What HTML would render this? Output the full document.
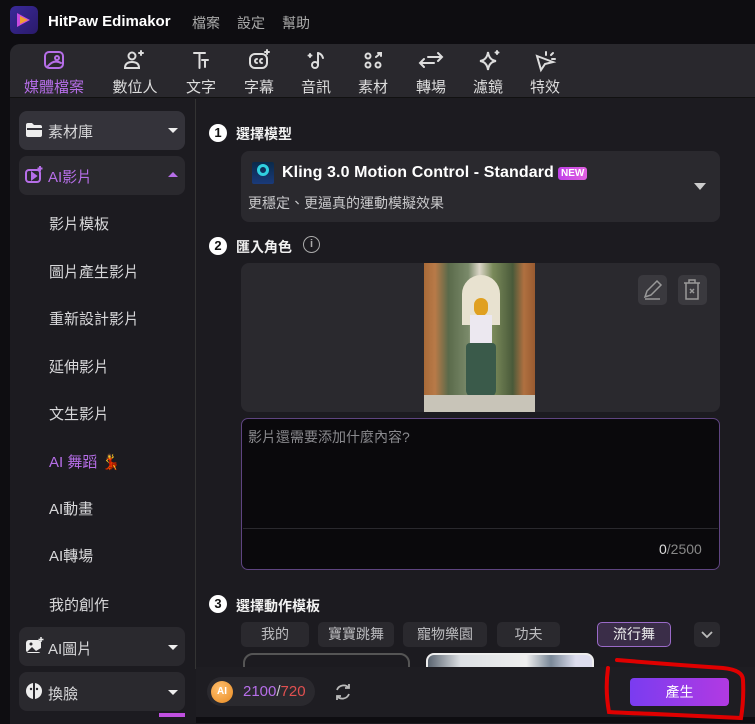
<!DOCTYPE html>
<html><head><meta charset="utf-8"><style>
*{box-sizing:border-box;margin:0;padding:0}
body{width:755px;height:723px;background:#0e0d11;font-family:"Liberation Sans","Noto Sans CJK TC",sans-serif;color:#e6e6e8;position:relative;overflow:hidden}
.a{position:absolute}
.t{white-space:nowrap}
.tb{font-size:15px;color:#ddd;text-align:center;width:60px}
.side{font-size:15px;color:#d8d8da}
.box{background:#2a292e;border-radius:8px}
.sbox{background:#2a292e;border-radius:8px;left:19px;width:166px;height:39px}
.chip{background:#2a292e;border-radius:5px;height:25px;top:622px;font-size:14px;color:#bdbdc0;text-align:center;line-height:25px}
.step{font-size:14px;font-weight:bold;color:#f2f2f2}
.num{width:18px;height:18px;border-radius:50%;background:#fff;color:#111;font-size:13px;font-weight:bold;text-align:center;line-height:18px}
</style></head><body>
<!-- title bar -->
<div class="a" style="left:10px;top:6px;width:28px;height:28px;border-radius:6px;background:linear-gradient(135deg,#3a2a9a,#2a1a6a)"></div>
<svg class="a" style="left:14px;top:11px" width="20" height="18" viewBox="0 0 20 18"><path d="M3 2 L16 9 L3 16Z" fill="#c84ae0"/><path d="M6 5 L14 9 L6 13Z" fill="#f0a030"/></svg>
<div class="a t" style="left:48px;top:13px;font-size:15px;font-weight:bold;color:#fff">HitPaw Edimakor</div>
<div class="a t" style="left:192px;top:13px;font-size:14px;color:#aaa">檔案</div>
<div class="a t" style="left:237px;top:13px;font-size:14px;color:#aaa">設定</div>
<div class="a t" style="left:282px;top:13px;font-size:14px;color:#aaa">幫助</div>
<!-- panel -->
<div class="a" style="left:10px;top:44px;width:745px;height:680px;background:#1c1b20;border-radius:10px 0 0 0"></div>
<div class="a" style="left:10px;top:44px;width:745px;height:54px;background:#29282d;border-radius:10px 0 0 0;border-bottom:1px solid #111"></div>
<!-- toolbar icons -->
<svg class="a" style="left:0;top:48px" width="580" height="26" viewBox="0 0 580 26" fill="none" stroke-width="2" stroke-linecap="round">
<g stroke="#b66ee8"><rect x="45" y="4" width="18" height="16" rx="4"/><circle cx="57" cy="10" r="2"/><path d="M48 18 Q54 11 61 15"/></g>
<g stroke="#ddd"><circle cx="132" cy="8" r="3.5"/><path d="M125 20 Q125 14 132 14 Q139 14 139 20Z"/><path d="M141 3v4M139 5h4"/>
<path d="M194 5h11M199.5 5v15M202 12h6M205 12v7"/>
<rect x="250" y="6" width="17" height="14" rx="5"/><path d="M257 11a2 2 0 1 0 0 4M262 11a2 2 0 1 0 0 4M267 2v4M265 4h4"/>
<path d="M318 5v12"/><circle cx="315" cy="17" r="3"/><path d="M318 5q4 1 5 5M310 6v3M308.5 7.5h3"/>
<circle cx="368" cy="8" r="2.5"/><circle cx="368" cy="17" r="2.5"/><circle cx="378" cy="17" r="2.5"/><path d="M376 9l5-4M378 5h3v3"/>
<path d="M420 15h14M424 11l-4 4 4 4M428 9h14M438 5l4 4-4 4"/>
<path d="M488 4 Q489 12 496 13 Q489 14 488 22 Q487 14 480 13 Q487 12 488 4Z"/><path d="M497 3v3M495.5 4.5h3"/>
<path d="M537 8 L553 14 L545 16 L541 22Z"/><path d="M546 4v3M553 5l-2 2M555 11h-3"/></g>
</svg>
<div class="a t tb" style="left:24px;top:76px;width:60px;color:#b66ee8">媒體檔案</div>
<div class="a t tb" style="left:105px;top:76px">數位人</div>
<div class="a t tb" style="left:171px;top:76px">文字</div>
<div class="a t tb" style="left:229px;top:76px">字幕</div>
<div class="a t tb" style="left:286px;top:76px">音訊</div>
<div class="a t tb" style="left:343px;top:76px">素材</div>
<div class="a t tb" style="left:401px;top:76px">轉場</div>
<div class="a t tb" style="left:458px;top:76px">濾鏡</div>
<div class="a t tb" style="left:515px;top:76px">特效</div>
<!-- sidebar divider -->
<div class="a" style="left:195px;top:99px;width:1px;height:570px;background:#333"></div>
<div class="a sbox" style="top:111px;background:#34333a"></div>
<svg class="a" style="left:25px;top:122px" width="18" height="16"><path d="M1 3a2 2 0 0 1 2-2h4l2 2h6a2 2 0 0 1 2 2v8a2 2 0 0 1-2 2H3a2 2 0 0 1-2-2Z" fill="#eee"/><path d="M2 7h15" stroke="#34333a" stroke-width="2"/></svg>
<div class="a t side" style="left:48px;top:121px">素材庫</div>
<div class="a" style="left:168px;top:128px;border:5px solid transparent;border-top:5px solid #eee;border-bottom:0"></div>
<div class="a sbox" style="top:156px"></div>
<svg class="a" style="left:24px;top:165px" width="20" height="20" fill="none" stroke="#b66ee8" stroke-width="2"><rect x="2" y="5" width="14" height="12" rx="3"/><path d="M8 8l4 3-4 3Z" fill="#b66ee8"/><path d="M16 1v5M13.5 3.5h5"/></svg>
<div class="a t side" style="left:48px;top:166px;color:#b66ee8">AI影片</div>
<div class="a" style="left:168px;top:172px;border:5px solid transparent;border-bottom:5px solid #b66ee8;border-top:0"></div>
<div class="a t side" style="left:49px;top:213px">影片模板</div>
<div class="a t side" style="left:49px;top:261px">圖片產生影片</div>
<div class="a t side" style="left:49px;top:308px">重新設計影片</div>
<div class="a t side" style="left:49px;top:356px">延伸影片</div>
<div class="a t side" style="left:49px;top:403px">文生影片</div>
<div class="a t side" style="left:49px;top:451px;color:#b66ee8">AI 舞蹈 <span style="color:#c02030">💃</span></div>
<div class="a t side" style="left:49px;top:498px">AI動畫</div>
<div class="a t side" style="left:49px;top:545px">AI轉場</div>
<div class="a t side" style="left:49px;top:594px">我的創作</div>
<div class="a sbox" style="top:627px"></div>
<svg class="a" style="left:25px;top:637px" width="19" height="18"><rect x="1" y="3" width="15" height="13" rx="3" fill="#eee"/><path d="M2 15l5-5 4 4 5-3v4H2Z" fill="#2a292e"/><circle cx="6" cy="7" r="1.5" fill="#2a292e"/><path d="M16 0v5M13.5 2.5h5" stroke="#eee" stroke-width="1.5"/></svg>
<div class="a t side" style="left:48px;top:638px">AI圖片</div>
<div class="a" style="left:168px;top:645px;border:5px solid transparent;border-top:5px solid #eee;border-bottom:0"></div>
<div class="a sbox" style="top:672px"></div>
<svg class="a" style="left:25px;top:682px" width="18" height="18"><circle cx="9" cy="9" r="8" fill="#eee"/><path d="M9 1v16" stroke="#2a292e" stroke-width="2"/><circle cx="6" cy="7" r="1.2" fill="#2a292e"/><circle cx="12" cy="7" r="1.2" fill="#2a292e"/></svg>
<div class="a t side" style="left:48px;top:683px">換臉</div>
<div class="a" style="left:168px;top:690px;border:5px solid transparent;border-top:5px solid #eee;border-bottom:0"></div>
<div class="a" style="left:159px;top:713px;width:26px;height:4px;background:#c050e0"></div>
<!-- step 1 -->
<div class="a num" style="left:209px;top:124px">1</div>
<div class="a t step" style="left:236px;top:124px">選擇模型</div>
<div class="a box" style="left:241px;top:151px;width:479px;height:71px"></div>
<div class="a" style="left:252px;top:162px;width:22px;height:22px;background:linear-gradient(#0a2a4a,#1a3a7a);border-radius:2px"></div>
<div class="a" style="left:257px;top:164px;width:12px;height:12px;border:3px solid #30d0e0;border-radius:50%"></div>
<div class="a t" style="left:282px;top:164px;font-size:16px;font-weight:bold;color:#fff;letter-spacing:0.1px">Kling 3.0 Motion Control - Standard</div>
<div class="a t" style="left:558px;top:167px;font-size:10px;font-weight:bold;color:#fff;background:linear-gradient(90deg,#c040e8,#e060e0);border-radius:3px;padding:1px 3px">NEW</div>
<div class="a t" style="left:248px;top:193px;font-size:14px;color:#c8c8ca">更穩定、更逼真的運動模擬效果</div>
<div class="a" style="left:694px;top:183px;border:6px solid transparent;border-top:7px solid #ccc;border-bottom:0"></div>
<!-- step 2 -->
<div class="a num" style="left:209px;top:237px">2</div>
<div class="a t step" style="left:236px;top:237px">匯入角色</div>
<div class="a" style="left:303px;top:236px;width:17px;height:17px;border:1.5px solid #aaa;border-radius:50%;font-size:11px;color:#aaa;text-align:center;line-height:14px;font-weight:bold">i</div>
<div class="a box" style="left:241px;top:263px;width:479px;height:149px"></div>
<div class="a" style="left:424px;top:263px;width:111px;height:149px;background:linear-gradient(90deg,#a86a38 0,#b87a48 10%,#5a6a4a 22%,#7a8a6a 40%,#dcd6c8 50%,#7a8a5a 62%,#4a5a3a 80%,#b07040 90%,#985a30 100%)"></div>
<div class="a" style="left:462px;top:275px;width:38px;height:50px;border-radius:19px 19px 0 0;background:#e8e2d0"></div>
<div class="a" style="left:474px;top:298px;width:14px;height:18px;border-radius:7px;background:#e0a020"></div>
<div class="a" style="left:470px;top:315px;width:22px;height:28px;background:#ece8f0"></div>
<div class="a" style="left:466px;top:343px;width:30px;height:55px;background:#3a5a4a;border-radius:4px 4px 8px 8px"></div>
<div class="a" style="left:424px;top:395px;width:111px;height:17px;background:#c8c4b8"></div>
<div class="a" style="left:638px;top:275px;width:29px;height:30px;background:#3a393e;border-radius:5px"></div>
<svg class="a" style="left:641px;top:279px" width="22" height="22" fill="none" stroke="#999" stroke-width="1.5"><path d="M4 18l2-6 10-10 4 4-10 10Z"/><path d="M4 20h15"/></svg>
<div class="a" style="left:678px;top:275px;width:29px;height:30px;background:#3a393e;border-radius:5px"></div>
<svg class="a" style="left:681px;top:278px" width="22" height="24" fill="none" stroke="#999" stroke-width="1.5"><path d="M3 5h16M8 5V2h6v3M5 5v16h12V5M9 11l4 4M13 11l-4 4"/></svg>
<!-- textarea -->
<div class="a" style="left:241px;top:418px;width:479px;height:152px;background:#0a090c;border:1.5px solid #5e4480;border-radius:7px"></div>
<div class="a" style="left:243px;top:528px;width:475px;height:1px;background:#2a292e"></div>
<div class="a t" style="left:248px;top:427px;font-size:14px;color:#8a8a8e">影片還需要添加什麼內容?</div>
<div class="a t" style="left:659px;top:541px;font-size:14px;color:#888"><span style="color:#ddd">0</span>/2500</div>
<!-- step 3 -->
<div class="a num" style="left:209px;top:595px">3</div>
<div class="a t step" style="left:236px;top:596px">選擇動作模板</div>
<div class="a chip" style="left:241px;width:68px">我的</div>
<div class="a chip" style="left:318px;width:76px">寶寶跳舞</div>
<div class="a chip" style="left:403px;width:84px">寵物樂園</div>
<div class="a chip" style="left:497px;width:63px">功夫</div>
<div class="a chip" style="left:597px;width:74px;background:#3a2d48;border:1.5px solid #9a6ac8;color:#eee;line-height:22px">流行舞</div>
<div class="a chip" style="left:694px;width:26px"></div>
<svg class="a" style="left:701px;top:630px" width="12" height="9"><path d="M1 2l5 5 5-5" stroke="#bbb" stroke-width="1.8" fill="none"/></svg>
<div class="a" style="left:243px;top:653px;width:167px;height:20px;border:2px solid #555;border-radius:10px 10px 0 0;background:#1c1b20"></div>
<div class="a" style="left:426px;top:653px;width:168px;height:20px;border:2px solid #eee;border-radius:8px 8px 0 0;background:linear-gradient(90deg,#5a6470,#dde0e4 20%,#eee 60%,#7a8898 75%,#dde 90%)"></div>
<!-- bottom bar -->
<div class="a" style="left:196px;top:667px;width:559px;height:50px;background:#1e1d22"></div>
<div class="a" style="left:196px;top:717px;width:559px;height:6px;background:#0e0d11"></div>
<div class="a" style="left:207px;top:677px;width:108px;height:29px;background:#2a292e;border-radius:15px"></div>
<div class="a" style="left:211px;top:681px;width:22px;height:22px;border-radius:50%;background:radial-gradient(circle at 40% 35%,#ffc070,#e88a20);font-size:10px;color:#fff;font-weight:bold;text-align:center;line-height:22px">AI</div>
<div class="a t" style="left:243px;top:683px;font-size:15px;color:#b66ee8">2100<span style="color:#ccc">/</span><span style="color:#e05050">720</span></div>
<svg class="a" style="left:333px;top:682px" width="20" height="20" fill="none" stroke="#bbb" stroke-width="1.8"><path d="M16 6a7 7 0 0 0-12 2M4 14a7 7 0 0 0 12-2"/><path d="M16 2v4h-4M4 18v-4h4"/></svg>
<div class="a" style="left:630px;top:678px;width:99px;height:28px;border-radius:4px;background:linear-gradient(90deg,#7a3cf0,#b23ae2);color:#fff;font-size:14px;text-align:center;line-height:28px">產生</div>
<svg class="a" style="left:595px;top:650px" width="160" height="73" fill="none" stroke="#e00000" stroke-width="4" stroke-linecap="round"><path d="M22 10 Q70 14 128 18 Q148 20 148 30 Q149 50 146 68 Q100 66 60 64 Q30 63 14 62 Q10 40 13 18"/></svg>
</body></html>
